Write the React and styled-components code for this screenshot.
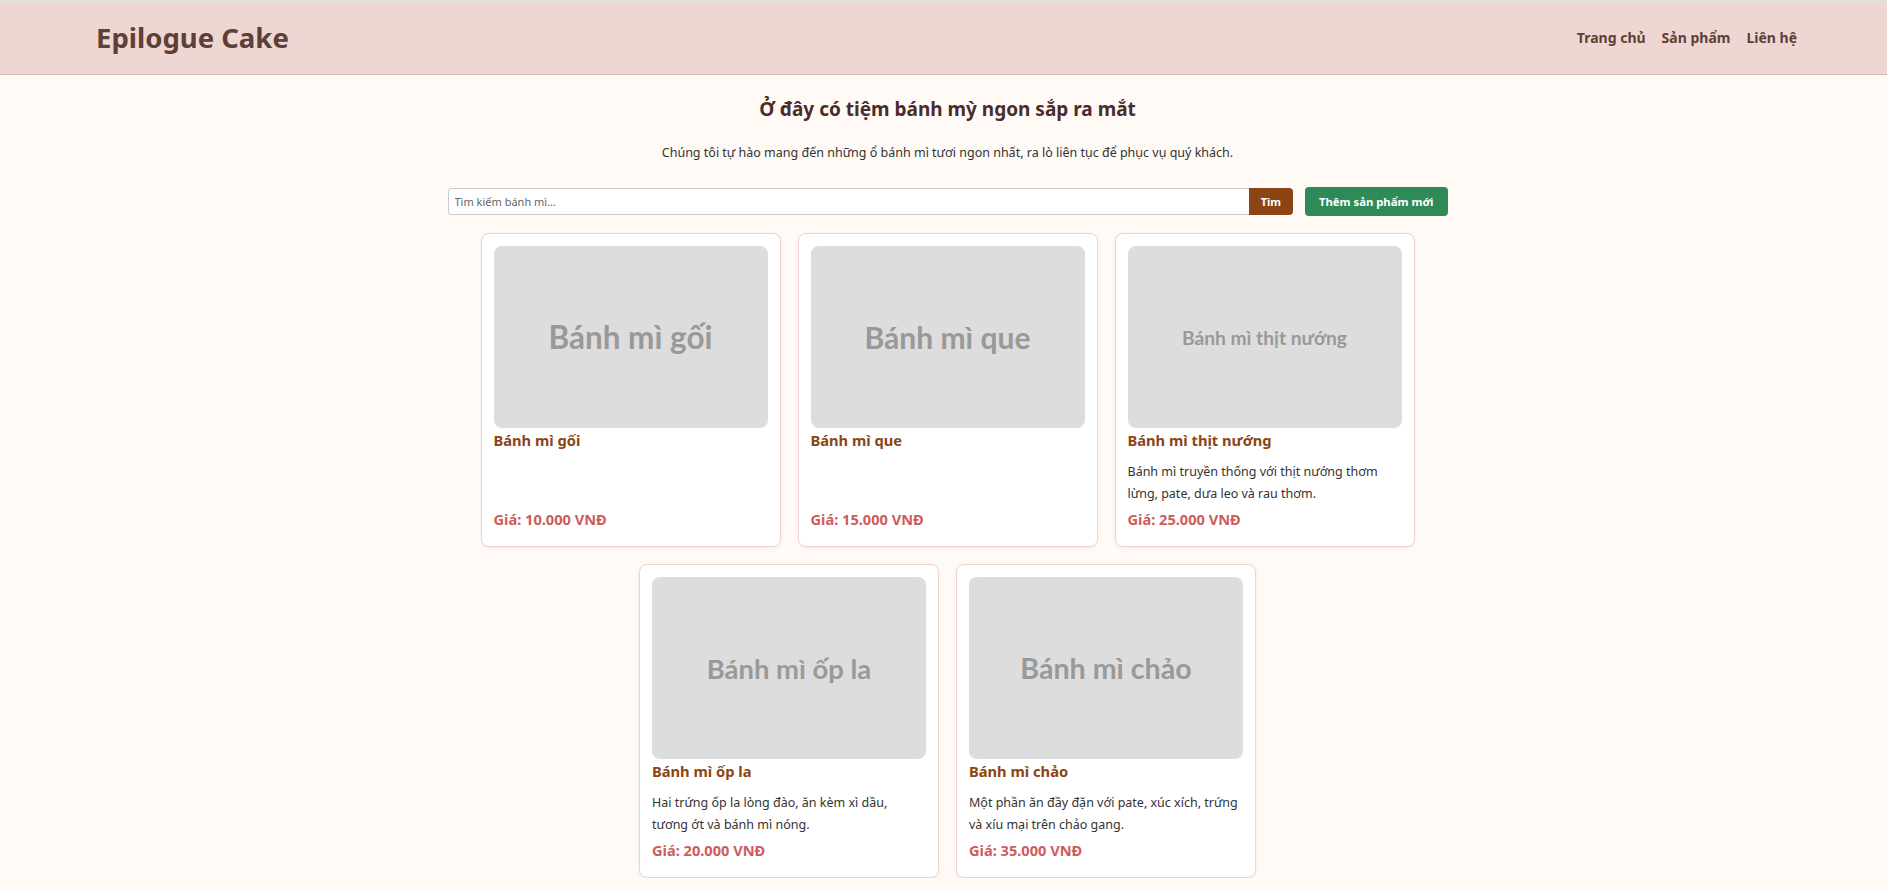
import React from 'react';
import styled, { createGlobalStyle } from 'styled-components';

const GlobalStyle = createGlobalStyle`
  * { box-sizing: border-box; }
  body {
    margin: 0;
    background: #fffaf6;
    font-family: 'Noto Sans', 'Open Sans', sans-serif;
    color: #333;
  }
`;

const products = [
  { name: 'Bánh mì gối', price: '10.000', desc: '', size: 31.5 },
  { name: 'Bánh mì que', price: '15.000', desc: '', size: 30 },
  {
    name: 'Bánh mì thịt nướng',
    price: '25.000',
    desc: 'Bánh mì truyền thống với thịt nướng thơm lừng, pate, dưa leo và rau thơm.',
    size: 19.2,
  },
  {
    name: 'Bánh mì ốp la',
    price: '20.000',
    desc: 'Hai trứng ốp la lòng đào, ăn kèm xì dầu, tương ớt và bánh mì nóng.',
    size: 27.4,
  },
  {
    name: 'Bánh mì chảo',
    price: '35.000',
    desc: 'Một phần ăn đầy đặn với pate, xúc xích, trứng và xíu mại trên chảo gang.',
    size: 28.6,
  },
];

function App() {
  return (
    <>
      <GlobalStyle />
      <Header>
        <Logo>Epilogue Cake</Logo>
        <Nav>
          <NavLink href="#">Trang chủ</NavLink>
          <NavLink href="#">Sản phẩm</NavLink>
          <NavLink href="#">Liên hệ</NavLink>
        </Nav>
      </Header>
      <Main>
        <Title>Ở đây có tiệm bánh mỳ ngon sắp ra mắt</Title>
        <Intro>
          Chúng tôi tự hào mang đến những ổ bánh mì tươi ngon nhất, ra lò liên tục để phục vụ quý khách.
        </Intro>
        <Toolbar>
          <SearchForm onSubmit={(e) => e.preventDefault()}>
            <SearchInput placeholder="Tìm kiếm bánh mì..." />
            <SearchButton type="submit">Tìm</SearchButton>
          </SearchForm>
          <AddButton type="button">Thêm sản phẩm mới</AddButton>
        </Toolbar>
        <Grid>
          {products.map((p) => (
            <Card key={p.name}>
              <Thumb>
                <ThumbText $size={p.size}>{p.name}</ThumbText>
              </Thumb>
              <CardTitle>{p.name}</CardTitle>
              {p.desc && <CardDesc>{p.desc}</CardDesc>}
              <Price>Giá: {p.price} VNĐ</Price>
            </Card>
          ))}
        </Grid>
      </Main>
    </>
  );
}

const Header = styled.header`
  display: flex;
  align-items: center;
  justify-content: space-between;
  height: 75px;
  padding: 0 90px 0 96px;
  background: #eed6d3;
  border-top: 1px solid #e2e2e2;
  border-bottom: 1px solid #d9b8b3;
`;
const Logo = styled.h1`
  margin: 0;
  font-size: 27.5px;
  font-weight: 700;
  color: #5d4037;
`;
const Nav = styled.nav`
  display: flex;
  gap: 16px;
`;
const NavLink = styled.a`
  font-size: 14px;
  font-weight: 700;
  color: #5d4037;
  text-decoration: none;
`;
const Main = styled.main`
  width: 1000px;
  margin: 0 0 0 calc(50% - 496px);
  padding-top: 20px;
`;
const Title = styled.h2`
  margin: 0;
  text-align: center;
  font-size: 19px;
  line-height: 28px;
  font-weight: 700;
  color: #4a2c2a;
`;
const Intro = styled.p`
  margin: 20px 0 0;
  text-align: center;
  font-size: 12.5px;
  line-height: 20px;
  color: #333;
`;
const Toolbar = styled.div`
  display: flex;
  align-items: center;
  gap: 12px;
  margin-top: 24px;
`;
const SearchForm = styled.form`
  display: flex;
  flex: 1;
  margin: 0;
`;
const SearchInput = styled.input`
  flex: 1;
  height: 27px;
  padding: 0 6px;
  border: 1px solid #ccc;
  border-right: none;
  border-radius: 4px 0 0 4px;
  font: 11px 'Noto Sans', sans-serif;
  color: #333;
  outline: none;
  &::placeholder { color: #666; }
`;
const SearchButton = styled.button`
  width: 44px;
  height: 27px;
  border: none;
  border-radius: 0 4px 4px 0;
  background: #8b4513;
  color: #fff;
  font: 700 11px 'Noto Sans', sans-serif;
`;
const AddButton = styled.button`
  height: 29px;
  padding: 0 14px;
  border: none;
  border-radius: 4px;
  background: #2e8b57;
  color: #fff;
  font: 700 11.3px 'Noto Sans', sans-serif;
`;
const Grid = styled.div`
  display: flex;
  flex-wrap: wrap;
  justify-content: center;
  gap: 17px;
  margin-top: 17px;
`;
const Card = styled.article`
  display: flex;
  flex-direction: column;
  width: 300px;
  padding: 12px 12px 17px;
  background: #fff;
  border: 1px solid #f0d2d0;
  border-radius: 8px;
  box-shadow: 0 1px 4px rgba(0, 0, 0, 0.06);
`;
const Thumb = styled.div`
  display: flex;
  align-items: center;
  justify-content: center;
  height: 182px;
  border-radius: 8px;
  background: #dddddd;
`;
const ThumbText = styled.span`
  font-family: Lato, 'Noto Sans', sans-serif;
  font-weight: 700;
  font-size: ${(p) => p.$size}px;
  color: #999;
`;
const CardTitle = styled.h3`
  margin: 2px 0 11px;
  font-size: 14.7px;
  line-height: 20px;
  font-weight: 700;
  color: #8b4513;
`;
const CardDesc = styled.p`
  margin: 0 0 4px;
  font-size: 12.5px;
  line-height: 22px;
  color: #333;
`;
const Price = styled.div`
  margin-top: auto;
  font-size: 14.6px;
  line-height: 20px;
  font-weight: 700;
  color: #cd5c5c;
`;

export default App;
